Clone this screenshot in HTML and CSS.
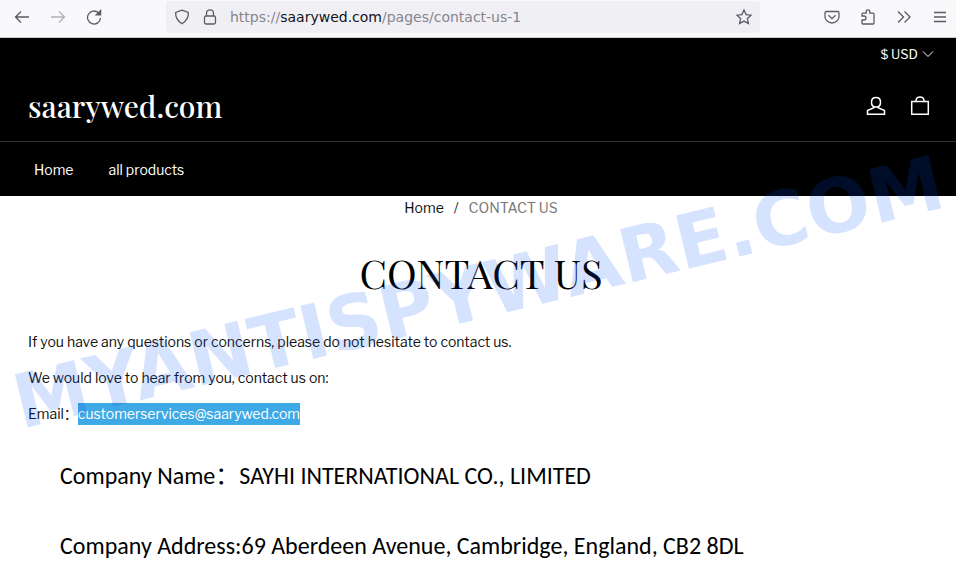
FILE: index.html
```html
<!DOCTYPE html>
<html lang="en">
<head>
<meta charset="utf-8">
<meta name="viewport" content="width=device-width, initial-scale=1">
<title>CONTACT US – saarywed.com</title>
<link rel="stylesheet" href="styles.css">
</head>
<body>
<div class="toolbar">
  <div class="nav-buttons">
    <button class="tool" aria-label="Back"><svg viewBox="0 0 16 16"><path d="M15 8H1.500M7 2.500 1.500 8 7 13.500"/></svg></button>
    <button class="tool faded" aria-label="Forward"><svg viewBox="0 0 16 16"><path d="M1 8h13.500M9 2.500 14.500 8 9 13.500"/></svg></button>
    <button class="tool" aria-label="Reload"><svg viewBox="0 0 16 16"><path d="M14.500 9A6.500 6.500 0 1 1 12.500 3.800"/><path class="solid" d="M14.600 1.500v4.300h-4.300z"/></svg></button>
  </div>
  <div class="address">
    <svg class="icon" viewBox="0 0 16 16"><path d="M8 1.200 14.300 3.500Q14.800 10.500 8 14.800 1.200 10.500 1.700 3.500Z"/></svg>
    <svg class="icon" viewBox="0 0 16 16"><rect x="2.500" y="7" width="11" height="8" rx="1.500"/><path d="M4.500 7V4.300a3.500 3.500 0 0 1 7 0V7"/></svg>
    <div class="url">https://<b>saarywed.com</b>/pages/contact-us-1</div>
    <button class="tool" aria-label="Bookmark"><svg viewBox="0 0 16 16"><path d="m8 1 2.100 4.600 5 .6-3.700 3.400 1 5L8 12.100 3.600 14.600l1-5L.9 6.200l5-.6z"/></svg></button>
  </div>
  <div class="actions">
    <button class="tool" aria-label="Pocket"><svg viewBox="0 0 16 16"><path d="M2.500 2.500h11a1.500 1.500 0 0 1 1.500 1.500v3.500a7 6.500 0 0 1-14 0V4a1.500 1.500 0 0 1 1.500-1.500zM4.500 6.300 8 9.600l3.500-3.300"/></svg></button>
    <button class="tool" aria-label="Extensions"><svg viewBox="0 0 16 16"><path d="M2 7V5.200Q2 4.200 3 4.200h3.200V2.600a1.800 1.800 0 0 1 3.600 0v1.600H13q1 0 1 1V14q0 1-1 1H3q-1 0-1-1v-3h2a2 2 0 0 0 0-4z"/></svg></button>
    <button class="tool" aria-label="More tools"><svg viewBox="0 0 16 16"><path d="M2 2.500 7.500 8 2 13.500M8.500 2.500 14 8l-5.500 5.500"/></svg></button>
    <button class="tool" aria-label="Menu"><svg viewBox="0 0 16 16"><path d="M2 3.500h12M2 8h12M2 12.500h12"/></svg></button>
  </div>
</div>

<div class="page">
  <header class="header">
    <div class="top-row">
      <button class="currency">$ USD <svg viewBox="0 0 12 8"><path d="M1 1.500 6 6.500l5-5"/></svg></button>
    </div>
    <div class="brand-row">
      <a class="brand" href="#">saarywed.com</a>
      <div class="shop-icons">
        <a href="#" aria-label="Account"><svg viewBox="0 0 20 20"><path d="M10 1.500c2.800 0 4.500 2 4.500 4.700S13 11 10 11 5.500 8.900 5.500 6.200 7.200 1.500 10 1.500zM7.800 10.800v1L1.500 14.500v3.700h17v-3.700l-6.300-2.700v-1"/></svg></a>
        <a href="#" aria-label="Cart"><svg viewBox="0 0 20 20"><path d="M1.700 5.500h16.600v12.700H1.700zM6 5.500V4.300Q6.500 1 10 1t4 3.300v1.200"/></svg></a>
      </div>
    </div>
    <nav class="menu"><a href="#">Home</a><a href="#">all products</a></nav>
  </header>
  <main>
    <nav class="crumbs"><a href="#">Home</a><span>/</span><span class="current">CONTACT US</span></nav>
    <h1>CONTACT US</h1>
    <div class="copy">
      <p>If you have any questions or concerns, please do not hesitate to contact us.</p>
      <p>We would love to hear from you, contact us on:</p>
      <p>Email：<mark>customerservices@saarywed.com</mark></p>
    </div>
    <div class="company">
      <p>Company Name：SAYHI INTERNATIONAL CO., LIMITED</p>
      <p>Company Address:69 Aberdeen Avenue, Cambridge, England, CB2 8DL</p>
    </div>
  </main>
  <svg class="watermark" viewBox="0 0 956 548"><text transform="translate(21 391) rotate(-13.500)">MYANTISPYWARE.COM</text></svg>
</div>
</body>
</html>
```
FILE: styles.css
```css
* { box-sizing: border-box; }
body {
  margin: 0;
  background: #fff;
  color: #111;
  font: 14px/22px "Libre Franklin", Roboto, "Noto Sans CJK SC", sans-serif;
}
a { color: inherit; text-decoration: none; }
button { border: 0; padding: 0; background: none; color: inherit; font: inherit; }
svg { display: block; fill: none; stroke: currentColor; }

.toolbar {
  display: flex;
  align-items: center;
  height: 38px;
  padding: 0 8px 3px 14px;
  background: #f9f9fb;
  border-bottom: 1px solid #ccc;
  color: #5b5b66;
}
.nav-buttons { display: flex; gap: 20px; width: 152px; }
.tool svg, .icon { width: 16px; height: 16px; flex: none; stroke-width: 1.3; }
.tool .solid { fill: currentColor; }
.faded { opacity: .45; }
.address {
  flex: 1;
  display: flex;
  align-items: center;
  gap: 12px;
  height: 32px;
  padding: 0 8px;
  border-radius: 4px;
  background: #f0f0f4;
}
.url { flex: 1; color: #85858d; font-family: "DejaVu Sans", sans-serif; font-size: 14px; }
.url b { color: #15141a; font-weight: 400; }
.actions { display: flex; gap: 20px; margin-left: 64px; }

.page { position: relative; overflow: hidden; }
.header { background: #000; color: #fff; }
.top-row { display: flex; justify-content: flex-end; padding: 6px 22px 0; }
.currency { display: flex; align-items: center; gap: 4px; font-size: 13px; line-height: 20px; }
.currency svg { width: 12px; height: 8px; }
.brand-row {
  display: flex;
  align-items: center;
  justify-content: space-between;
  height: 78px;
  padding: 6px 26px 0 28px;
  border-bottom: 1px solid #303030;
}
.brand { font: 500 30px/44px "Playfair Display", "Liberation Serif", serif; }
.shop-icons { display: flex; gap: 24px; }
.shop-icons svg { width: 20px; height: 20px; stroke-width: 1.5; }
.menu { display: flex; gap: 35px; padding: 17px 34px 15px; }

.crumbs { display: flex; justify-content: center; gap: 10px; padding: 1px 0 0 6px; }
.current { color: #777; }
h1 {
  margin: 24px 0 28px 6px;
  color: #000;
  text-align: center;
  font: 400 40px/60px "Playfair Display", "Liberation Serif", serif;
}
.copy { padding: 0 28px; }
.copy p { margin: 0 0 14px; }
mark { display: inline-block; background: #3fa9e5; color: #fff; }
.company {
  padding: 17px 60px 0;
  color: #000;
  font: 24px/40px Carlito, Lato, "Noto Sans CJK SC", sans-serif;
}
.company p { margin: 0 0 30px; }
.watermark { position: absolute; top: 0; left: 0; width: 100%; pointer-events: none; }
.watermark text {
  fill: #0050fa;
  fill-opacity: .16;
  stroke: none;
  font: bold 75px "DejaVu Sans", sans-serif;
}
```
